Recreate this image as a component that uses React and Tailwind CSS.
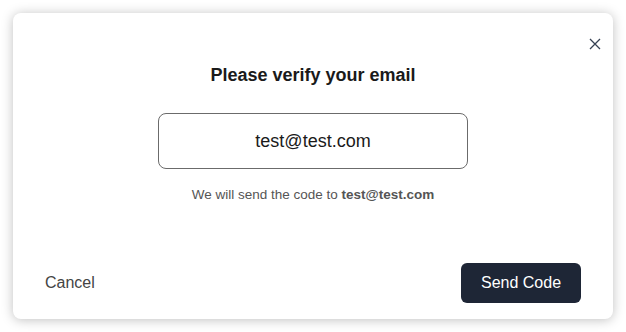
import React, { useState } from "react";

const App = () => {
  const [email] = useState("test@test.com");

  return (
    <div
      className="w-[626px] h-[332px] bg-white p-[13px]"
      style={{ fontFamily: '"Liberation Sans", Arial, sans-serif' }}
    >
      <div className="relative w-[600px] h-[306px] bg-white rounded-lg shadow-[0_1px_12px_rgba(0,0,0,0.25)] flex flex-col items-center">
        <button className="absolute top-[25px] right-[12px] text-gray-700">
          <svg width="12" height="12" viewBox="0 0 12 12" fill="none" stroke="currentColor" strokeWidth="1.3">
            <path d="M1 1L11 11M11 1L1 11" />
          </svg>
        </button>

        <h1 className="mt-[51px] text-[18px] leading-[22px] font-bold text-[#1a1a1a]">
          Please verify your email
        </h1>

        <input
          readOnly
          value={email}
          className="mt-[27px] w-[310px] h-[56px] rounded-lg border border-[#6b6b6b] text-center text-[18px] text-[#1a1a1a] outline-none"
        />

        <p className="mt-[18px] text-[13.5px] leading-[16px] text-[#555]">
          We will send the code to <span className="font-bold">{email}</span>
        </p>

        <div className="mt-auto mb-[16px] w-full flex items-center justify-between pl-[32px] pr-[32px]">
          <button className="text-[16px] text-[#444]">Cancel</button>
          <button className="w-[120px] h-[40px] rounded-md bg-[#1e2636] text-white text-[16px]">
            Send Code
          </button>
        </div>
      </div>
    </div>
  );
};

export default App;
